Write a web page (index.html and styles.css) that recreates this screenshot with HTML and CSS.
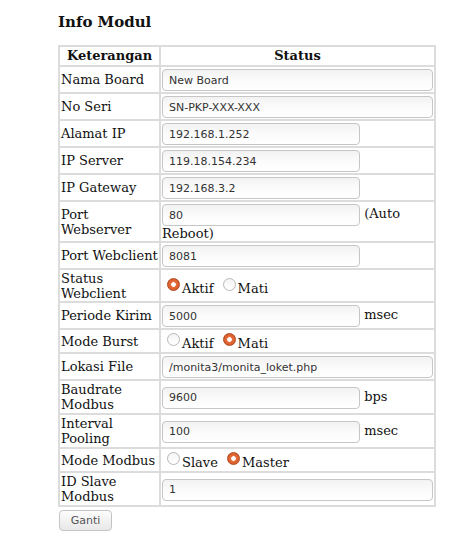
FILE: index.html
```html
<!DOCTYPE html>
<html>
<head>
<meta charset="utf-8">
<link rel="stylesheet" href="styles.css">
</head>
<body>
<div class="wrap">
<h3 class="title">Info Modul</h3>
<form>
<table class="info">
<tr><th class="col1">Keterangan</th><th>Status</th></tr>
<tr><td>Nama Board</td><td><input class="full" type="text" value="New Board"></td></tr>
<tr><td>No Seri</td><td><input class="full" type="text" value="SN-PKP-XXX-XXX"></td></tr>
<tr><td>Alamat IP</td><td><input class="short" type="text" value="192.168.1.252"></td></tr>
<tr><td>IP Server</td><td><input class="short" type="text" value="119.18.154.234"></td></tr>
<tr><td>IP Gateway</td><td><input class="short" type="text" value="192.168.3.2"></td></tr>
<tr class="tight"><td>Port Webserver</td><td><input class="short" type="text" value="80"> (Auto Reboot)</td></tr>
<tr><td>Port Webclient</td><td><input class="short" type="text" value="8081"></td></tr>
<tr class="tight"><td>Status Webclient</td><td><input type="radio" name="wc" checked>Aktif <input type="radio" name="wc">Mati</td></tr>
<tr><td>Periode Kirim</td><td><input class="short" type="text" value="5000"> msec</td></tr>
<tr><td>Mode Burst</td><td><input type="radio" name="mb">Aktif <input type="radio" name="mb" checked>Mati</td></tr>
<tr><td>Lokasi File</td><td><input class="full" type="text" value="/monita3/monita_loket.php"></td></tr>
<tr><td>Baudrate Modbus</td><td><input class="short" type="text" value="9600"> bps</td></tr>
<tr><td>Interval Pooling</td><td><input class="short" type="text" value="100"> msec</td></tr>
<tr><td>Mode Modbus</td><td><input type="radio" name="mm">Slave <input type="radio" name="mm" checked>Master</td></tr>
<tr><td>ID Slave Modbus</td><td><input class="full" type="text" value="1"></td></tr>
</table>
<button class="btn" type="button">Ganti</button>
</form>
</div>
</body>
</html>
```
FILE: styles.css
```css
body {
  margin: 8px;
  font-family: "DejaVu Serif", serif;
  font-size: 13px;
  color: #111;
  background: #fff;
}
.wrap {
  padding-left: 50px;
}
.title {
  font-size: 15px;
  font-weight: bold;
  margin: 5px 0 14px 0;
}
.info {
  border-collapse: separate;
  border-spacing: 0;
  border: 1px solid #dcdcdc;
  width: 378px;
}
.info th, .info td {
  border: 1px solid #dcdcdc;
  padding: 1px 1px;
  text-align: left;
  vertical-align: middle;
  line-height: 15px;
}
.info tr.tight td {
  padding-bottom: 0;
}
.info th {
  text-align: center;
  font-weight: bold;
  padding: 1px 1px 2px;
}
.info td:first-child, .col1 {
  width: 98px;
}
input[type="text"] {
  font-family: "DejaVu Sans", sans-serif;
  font-size: 11px;
  color: #333;
  height: 22px;
  box-sizing: border-box;
  border: 1px solid #c6c6c6;
  border-radius: 4px;
  padding: 2px 6px;
  margin: 1px 0 0;
  background: linear-gradient(#f2f2f2, #fbfbfb 50%, #fff);
  vertical-align: middle;
}
input.full {
  width: 271px;
}
input.short {
  width: 198px;
}
input[type="radio"] {
  appearance: none;
  -webkit-appearance: none;
  width: 13px;
  height: 13px;
  border-radius: 50%;
  border: 1px solid #b8b8b8;
  background: linear-gradient(#f4f4f4, #fff);
  margin: 2px 2px 2px 5px;
  vertical-align: 0;
  box-sizing: border-box;
}
input[type="radio"]:checked {
  border: 1px solid #b0471c;
  background: radial-gradient(circle, #fff 0, #fff 2px, #e86d3c 2.6px, #c9521f 100%);
}
.btn {
  font-family: "DejaVu Sans", sans-serif;
  font-size: 11px;
  color: #555;
  margin-top: 3px;
  margin-left: 1px;
  width: 53px;
  height: 21px;
  border: 1px solid #c4c4c4;
  border-radius: 4px;
  background: linear-gradient(#fdfdfd, #e8e8e8);
  padding: 0;
}
```
